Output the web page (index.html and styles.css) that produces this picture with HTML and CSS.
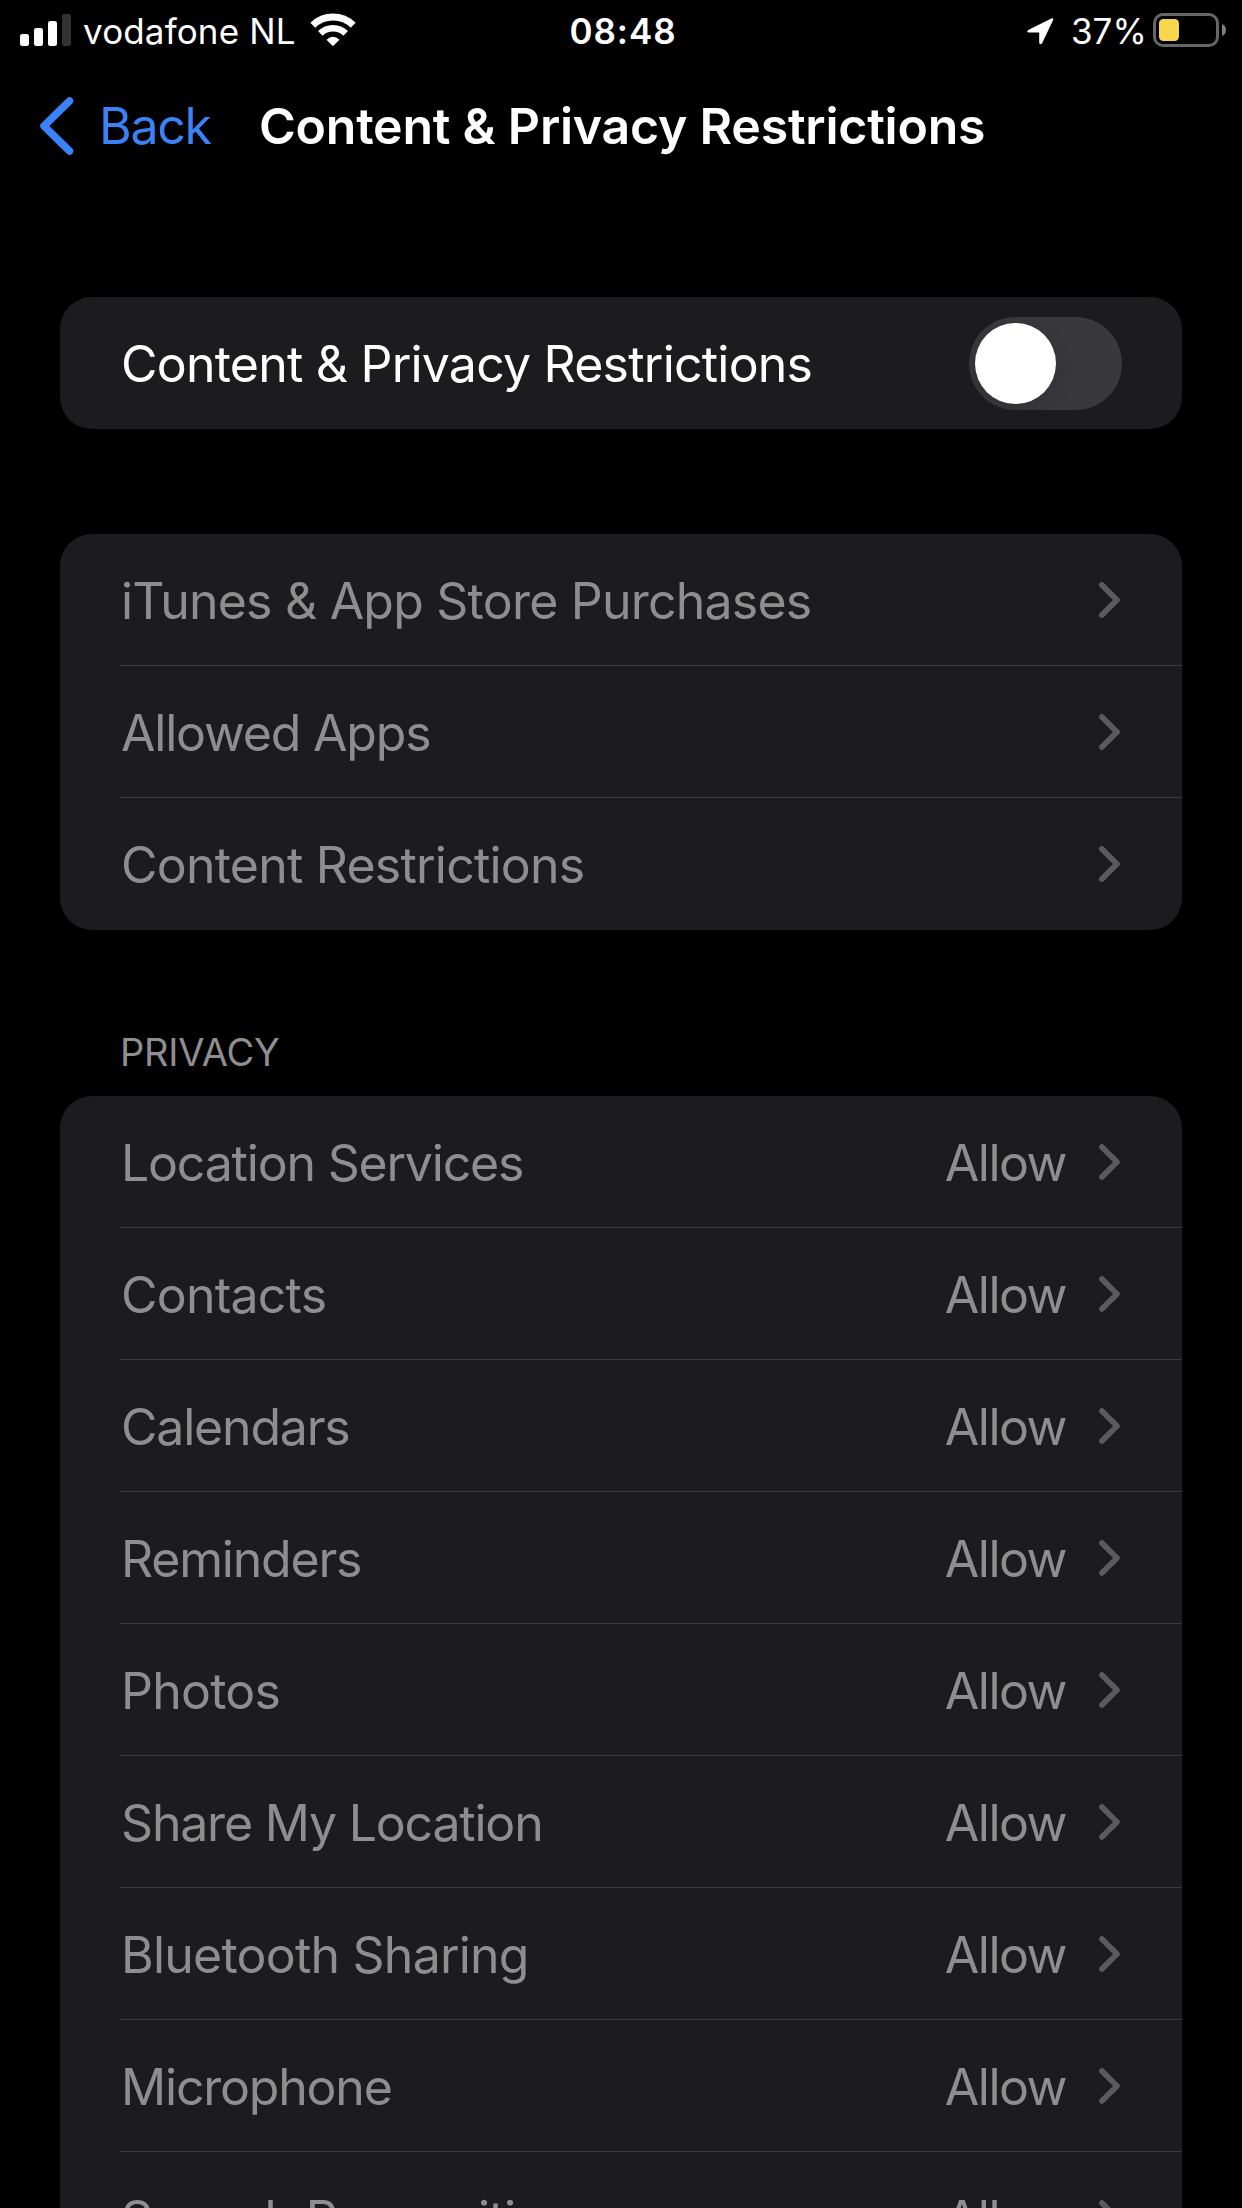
FILE: index.html
```
<!DOCTYPE html>
<html lang="en">
<head>
<meta charset="utf-8">
<title>Content &amp; Privacy Restrictions</title>
<link rel="stylesheet" href="styles.css">
</head>
<body>
<svg class="sprite" aria-hidden="true"><symbol id="chevron" viewBox="0 0 21 36"><path d="M2.9 2.9 18 18 2.9 33.1" fill="none" stroke="currentColor" stroke-width="5.6" stroke-linecap="round" stroke-linejoin="round"/></symbol></svg>
<div class="screen">
  <header class="status">
    <div class="status-left">
      <svg class="signal" width="51" height="32" viewBox="0 0 51 32" fill="#fff"><rect y="20" width="9" height="12" rx="2.3"/><rect x="14" y="14" width="9" height="18" rx="2.3"/><rect x="28" y="7" width="9" height="25" rx="2.3"/><rect x="42" width="9" height="32" rx="2.3" fill="#333"/></svg>
      <span class="carrier">vodafone NL</span>
      <svg class="wifi" width="46" height="33" viewBox="0 0 46 33"><g fill="none" stroke="#fff" stroke-width="7"><path d="M2.8 12.3A29 29 0 0 1 43.2 12.3"/><path d="M10.3 20.3A18.3 18.3 0 0 1 35.7 20.3" stroke-width="6.6"/></g><path d="M16.5 26.8Q23 20.5 29.5 26.8L23.7 32.6Q23 33.2 22.3 32.6Z" fill="#fff"/></svg>
    </div>
    <span class="time">08:48</span>
    <div class="status-right">
      <svg class="locate" width="27" height="27" viewBox="0 0 27 27"><path d="M1.2 12.1 24.3.5Q27-.6 26 2.3L15.1 25.2Q12.5 27.5 12.2 24.4V14.6H2Q-1 14.2 1.2 12.1Z" fill="#fff"/></svg>
      <span class="percent">37%</span>
      <svg class="battery" width="73" height="34" viewBox="0 0 73 34"><rect x="1.5" y="1.5" width="63" height="31" rx="8.5" fill="none" stroke="#666" stroke-width="3"/><rect x="6" y="6" width="20" height="22" rx="4.5" fill="#f7d74c"/><path d="M69 11Q73 12.500 73 17T69 23Z" fill="#808080"/></svg>
    </div>
  </header>
  <nav class="nav">
    <a class="back"><svg width="34" height="58" viewBox="0 0 34 58"><path d="M29.500 4 4 29 29.500 54" fill="none" stroke="currentColor" stroke-width="7.500" stroke-linecap="round" stroke-linejoin="round"/></svg><span class="back-text">Back</span></a>
    <h1 class="title">Content &amp; Privacy Restrictions</h1>
  </nav>
  <main class="content">
    <section class="card">
      <div class="row row-toggle"><span class="label">Content &amp; Privacy Restrictions</span><span class="switch"><span class="knob"></span></span></div>
    </section>
    <section class="card card-links">
      <div class="row"><span class="label">iTunes &amp; App Store Purchases</span><svg class="chev"><use href="#chevron"/></svg></div>
      <div class="row"><span class="label tight">Allowed Apps</span><svg class="chev"><use href="#chevron"/></svg></div>
      <div class="row"><span class="label">Content Restrictions</span><svg class="chev"><use href="#chevron"/></svg></div>
    </section>
    <h2 class="section-title"><span>PRIVACY</span></h2>
    <section class="card card-privacy">
      <div class="row"><span class="label tight">Location Services</span><span class="value">Allow</span><svg class="chev"><use href="#chevron"/></svg></div>
      <div class="row"><span class="label">Contacts</span><span class="value">Allow</span><svg class="chev"><use href="#chevron"/></svg></div>
      <div class="row"><span class="label tight">Calendars</span><span class="value">Allow</span><svg class="chev"><use href="#chevron"/></svg></div>
      <div class="row"><span class="label tight">Reminders</span><span class="value">Allow</span><svg class="chev"><use href="#chevron"/></svg></div>
      <div class="row"><span class="label">Photos</span><span class="value">Allow</span><svg class="chev"><use href="#chevron"/></svg></div>
      <div class="row"><span class="label tight">Share My Location</span><span class="value">Allow</span><svg class="chev"><use href="#chevron"/></svg></div>
      <div class="row"><span class="label">Bluetooth Sharing</span><span class="value">Allow</span><svg class="chev"><use href="#chevron"/></svg></div>
      <div class="row"><span class="label tight">Microphone</span><span class="value">Allow</span><svg class="chev"><use href="#chevron"/></svg></div>
      <div class="row"><span class="label tight">Speech Recognition</span><span class="value">Allow</span><svg class="chev"><use href="#chevron"/></svg></div>
    </section>
  </main>
</div>
</body>
</html>
```
FILE: styles.css
```
* { box-sizing: border-box; }
body { margin: 0; background: #000; }
svg { display: block; flex: none; }
.sprite { display: none; }
.screen {
  width: 1242px;
  height: 2208px;
  overflow: hidden;
  background: #000;
  color: #fff;
  font-family: Inter, "Liberation Sans", sans-serif;
  font-size: 50px;
  white-space: nowrap;
}
.status {
  display: grid;
  grid-template-columns: 1fr auto 1fr;
  height: 60px;
  padding: 0 16px 0 20px;
  font-size: 35px;
  line-height: 62px;
}
.status-left, .status-right { display: flex; }
.status-right { justify-content: flex-end; }
.signal { margin-top: 14px; }
.carrier { width: 226px; margin-left: 12px; letter-spacing: 0.15px; }
.wifi { margin: 13px 0 0 1px; }
.time { font-weight: 600; letter-spacing: 0.9px; }
.locate { margin: 18px 17px 0 0; }
.percent { width: 82px; }
.battery { margin-top: 13px; }
.nav {
  display: flex;
  height: 132px;
  padding: 0 40px;
  line-height: 132px;
}
.back { display: flex; width: 219px; color: #3a82f7; }
.back svg { margin: 37px 25px 0 0; }
.back-text { letter-spacing: -1.3px; }
.title { margin: 0; font-size: 50px; font-weight: 600; letter-spacing: -0.23px; }
.content { padding: 105px 60px 0; }
.card { background: #1c1c1e; border-radius: 32px; overflow: hidden; }
.card-links { margin-top: 105px; }
.row {
  display: flex;
  align-items: center;
  height: 132px;
  margin-left: 60px;
  padding-right: 62px;
  color: #8e8e8e;
  line-height: 132px;
}
.row + .row { box-shadow: 0 -1px 0 #3d3d41; }
.row-toggle { padding-right: 60px; color: #fff; }
.label { flex: 1; padding: 2px 0 0 1px; letter-spacing: -0.78px; }
.label.tight { letter-spacing: -1.2px; }
.value { padding-top: 2px; margin-right: 33px; letter-spacing: -1.5px; }
.chev { width: 21px; height: 36px; color: #5b5b5f; }
.switch {
  width: 153px;
  height: 93px;
  padding: 6px;
  border-radius: 47px;
  background: #39393d;
}
.knob {
  display: block;
  width: 81px;
  height: 81px;
  border-radius: 50%;
  background: #fff;
  box-shadow: 0 6px 20px rgba(0, 0, 0, 0.15);
}
.section-title {
  height: 166px;
  margin: 0;
  padding: 92px 60px 0;
  color: #8e8e93;
  font-size: 38px;
  font-weight: 400;
  letter-spacing: -0.2px;
  line-height: 60px;
}
.switch { overflow: hidden; }
```
